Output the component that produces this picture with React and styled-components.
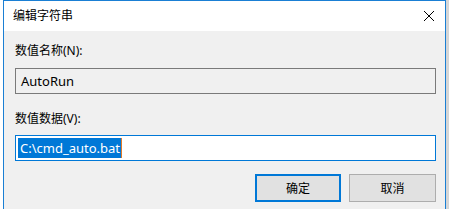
import React from "react";
import styled, { createGlobalStyle } from "styled-components";

const GlobalStyle = createGlobalStyle`
  html, body {
    margin: 0;
    padding: 0;
    overflow: hidden;
  }
  body {
    font-family: "Noto Sans", "Noto Sans CJK SC", sans-serif;
    font-size: 12px;
    color: #000;
    background: #cfcfcf;
  }
`;

const Desktop = styled.div`
  width: 449px;
  height: 209px;
  overflow: hidden;
  display: flex;
  background: linear-gradient(to right, #ffffff 0 3px, #d6d6d6 3px);
`;

const Window = styled.div`
  margin-left: 3px;
  width: 441px;
  height: 209px;
  border: 1px solid #1a7fd4;
  border-bottom: none;
  background: #f0f0f0;
  display: flex;
  flex-direction: column;
`;

const TitleBar = styled.div`
  height: 30px;
  background: #ffffff;
  display: flex;
  align-items: center;
  justify-content: space-between;
  padding: 0 10px 0 9px;
`;

const Title = styled.span`
  font-size: 12px;
  line-height: 1;
`;

const CloseButton = styled.div`
  width: 12px;
  height: 12px;
  display: flex;
`;

const Body = styled.div`
  display: flex;
  flex-direction: column;
  padding: 11px 10px 0 11px;
`;

const Label = styled.div`
  height: 18px;
  line-height: 18px;
  margin-bottom: ${({ $gap }) => $gap}px;
`;

const Field = styled.div`
  box-sizing: border-box;
  height: 26px;
  width: 421px;
  border: 1px solid ${({ $active }) => ($active ? "#0078d7" : "#7a7a7a")};
  background: ${({ $active }) => ($active ? "#ffffff" : "#f0f0f0")};
  display: flex;
  align-items: center;
  padding-left: ${({ $active }) => ($active ? 2 : 5)}px;
  margin-bottom: ${({ $gap }) => $gap}px;
  font-size: 13px;
`;

const Selected = styled.span`
  background: #0078d7;
  color: #ffffff;
  line-height: 20px;
  padding: 0 1px 0 2px;
  border-right: 1px solid #e07b2a;
`;

const Buttons = styled.div`
  display: flex;
  justify-content: flex-end;
  gap: 8px;
  width: 421px;
`;

const Button = styled.button`
  box-sizing: border-box;
  width: ${({ $w }) => $w}px;
  height: 28px;
  background: #e1e1e1;
  border: ${({ $default }) =>
    $default ? "2px solid #0078d7" : "1px solid #adadad"};
  font-family: inherit;
  font-size: 12px;
  color: #000;
  padding: 0;
`;

export default function App() {
  return (
    <>
      <GlobalStyle />
      <Desktop>
        <Window>
          <TitleBar>
            <Title>编辑字符串</Title>
            <CloseButton>
              <svg width="12" height="12" viewBox="0 0 12 12">
                <path
                  d="M1 1 L11 11 M11 1 L1 11"
                  stroke="#000"
                  strokeWidth="1"
                  fill="none"
                />
              </svg>
            </CloseButton>
          </TitleBar>
          <Body>
            <Label $gap={8}>数值名称(N):</Label>
            <Field $gap={16}>AutoRun</Field>
            <Label $gap={7}>数值数据(V):</Label>
            <Field $active $gap={13}>
              <Selected>C:\cmd_auto.bat</Selected>
            </Field>
            <Buttons>
              <Button $default $w={86}>确定</Button>
              <Button $w={87}>取消</Button>
            </Buttons>
          </Body>
        </Window>
      </Desktop>
    </>
  );
}
